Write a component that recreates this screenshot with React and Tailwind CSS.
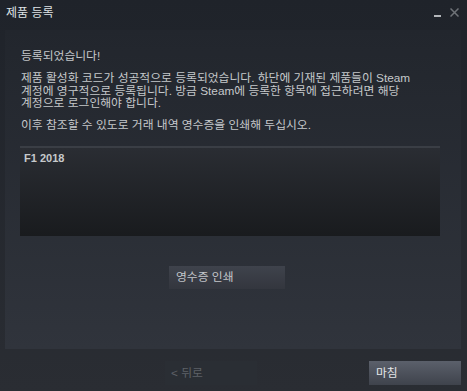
import React from 'react';

export default function App() {
    const font = { fontFamily: '"Liberation Sans", "Noto Sans CJK KR", Arial, sans-serif' };

    return (
        <div
            className="w-[467px] h-[391px] flex flex-col bg-gradient-to-b from-[#1f232a] to-[#2a2d33] text-[11.8px] leading-[13px] overflow-hidden"
            style={font}
        >
            {/* title bar */}
            <div className="h-[30px] flex items-start justify-between pl-[6px] pr-[8px] pt-[7px]">
                <span className="text-[#dfe3e6] text-[12px]">제품 등록</span>
                <div className="flex items-center gap-[9px] text-[#8a8d92]">
                    <div className="w-[7px] h-[2px] bg-[#b4b7bb] mt-[8px]" />
                    <svg width="9" height="9" viewBox="0 0 9 9" className="mt-[1px]">
                        <path d="M0.5 0.5 L8.5 8.5 M8.5 0.5 L0.5 8.5" stroke="#6f7378" strokeWidth="1.5" />
                    </svg>
                </div>
            </div>

            {/* main panel */}
            <div className="ml-[5px] mr-[6px] h-[319px] bg-gradient-to-b from-[#22262d] to-[#30343c] pl-[15px] pr-[21px] pt-[20px] flex flex-col">
                <p className="text-[#c5c8cb] pl-[1px]">등록되었습니다!</p>
                <p className="text-[#c5c8cb] mt-[9px] pl-[1px] leading-[12.6px]">
                    제품 활성화 코드가 성공적으로 등록되었습니다. 하단에 기재된 제품들이 Steam
                    <br />
                    계정에 영구적으로 등록됩니다. 방금 Steam에 등록한 항목에 접근하려면 해당
                    <br />
                    계정으로 로그인해야 합니다.
                </p>
                <p className="text-[#c5c8cb] mt-[9px] pl-[1px]">이후 참조할 수 있도로 거래 내역 영수증을 인쇄해 두십시오.</p>

                <div className="mt-[14px] h-[90px] border-t-2 border-[#3a3e45] bg-gradient-to-b from-[#2a2d33] to-[#191b1e] px-[4px] pt-[4px]">
                    <span className="text-[#c6c9cc] text-[11px] font-bold">F1 2018</span>
                </div>

                <div className="mt-[30px] flex">
                    <button className="ml-[149px] w-[116px] h-[23px] bg-gradient-to-b from-[#3f434c] to-[#33363e] text-left pl-[7px] text-[#c3c6ca]">
                        영수증 인쇄
                    </button>
                </div>
            </div>

            {/* footer buttons */}
            <div className="flex mt-[12px] pl-[165px] pr-[6px]">
                <button className="w-[92px] h-[24px] bg-[#2a2e34] text-left pl-[6px] text-[#5d6167]">
                    &lt; 뒤로
                </button>
                <div className="flex-1" />
                <button className="w-[92px] h-[24px] bg-gradient-to-b from-[#5b606b] to-[#3f434c] text-left pl-[7px] text-[#e4e6e9]">
                    마침
                </button>
            </div>
        </div>
    );
}
